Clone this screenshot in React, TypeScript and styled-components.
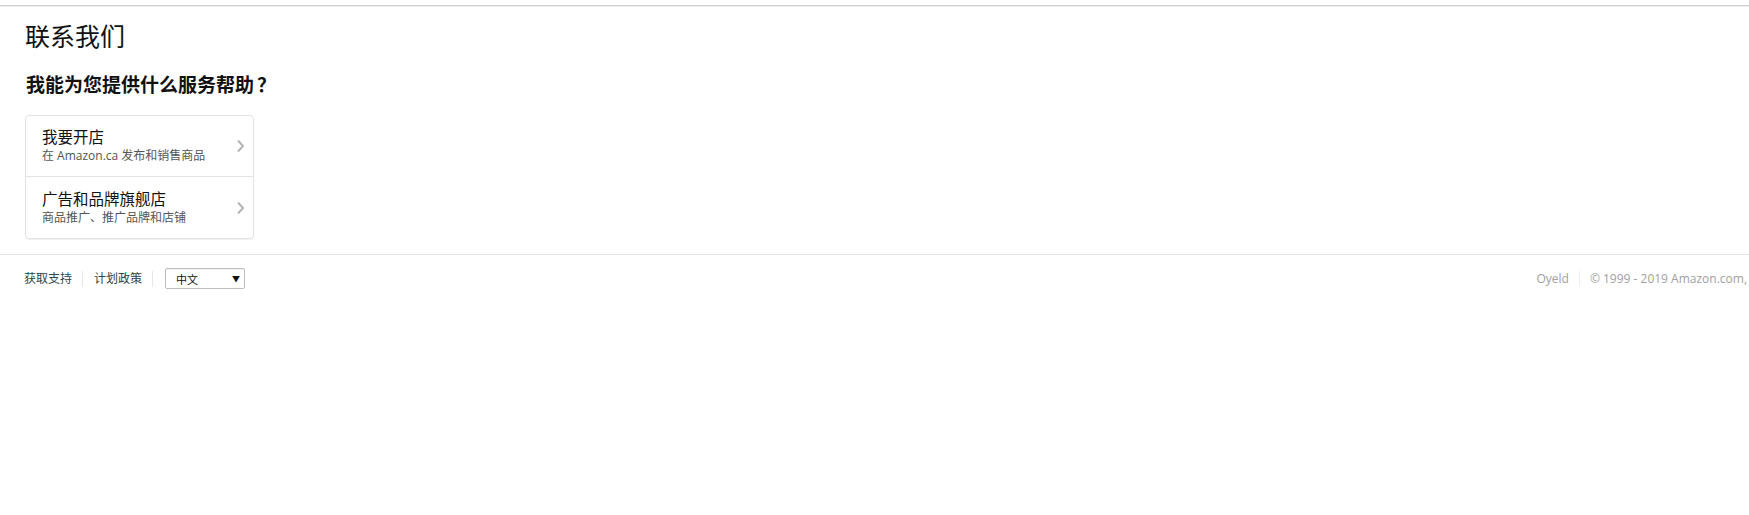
import React from "react";
import styled, { createGlobalStyle } from "styled-components";

const Global = createGlobalStyle`
  html, body { margin: 0; padding: 0; background: #fff; overflow: hidden; }
  body {
    font-family: "Open Sans", "Noto Sans CJK SC", sans-serif;
    color: #111;
  }
  * { box-sizing: border-box; }
`;

const Page = styled.div`
  padding-top: 5px;
  width: 100%;
`;

const TopRule = styled.div`
  height: 2px;
  border-top: 1px solid #d0d0d0;
  border-bottom: 1px solid #ececec;
`;

const Main = styled.main`
  padding: 0 25px;
  display: flex;
  flex-direction: column;
`;

const Title = styled.h1`
  margin: 13px 0 0 0;
  font-size: 25px;
  line-height: 32px;
  font-weight: 400;
  color: #111;
`;

const Heading = styled.h2`
  margin: 19px 0 0 1px;
  font-size: 19px;
  line-height: 26px;
  font-weight: 700;
  color: #111;
`;

const Q = styled.span`
  margin-left: 3px;
  font-family: "Noto Sans CJK SC", sans-serif;
`;

const Card = styled.div`
  margin-top: 17px;
  width: 229px;
  border: 1px solid #e3e3e3;
  border-radius: 4px;
  box-shadow: 0 1px 1px rgba(0, 0, 0, 0.06);
  display: flex;
  flex-direction: column;
`;

const Row = styled.a<{ $last?: boolean }>`
  display: flex;
  align-items: center;
  height: 61px;
  padding: 0 8px 0 16px;
  border-bottom: ${(p) => (p.$last ? "none" : "1px solid #e3e3e3")};
  text-decoration: none;
  cursor: pointer;
`;

const RowText = styled.div`
  flex: 1;
  display: flex;
  flex-direction: column;
`;

const RowTitle = styled.span`
  font-size: 15.5px;
  line-height: 19px;
  color: #111;
`;

const RowSub = styled.span`
  font-size: 12px;
  line-height: 17px;
  color: #555;
`;

const Chevron = () => (
  <svg width="9" height="14" viewBox="0 0 9 14" aria-hidden>
    <path d="M2 1.5 L7 7 L2 12.5" fill="none" stroke="#b4b4b4" strokeWidth="2" />
  </svg>
);

const Footer = styled.footer`
  margin-top: 15px;
  border-top: 1px solid #e3e3e3;
  padding: 13px 2px 0 24px;
  display: flex;
  align-items: center;
`;

const LinkGroup = styled.div`
  display: flex;
  align-items: center;
`;

const FootLink = styled.a`
  font-size: 12px;
  line-height: 16px;
  color: #2e4449;
  text-decoration: none;
  padding-right: 10px;
  margin-right: 11px;
  border-right: 1px solid #e7e7e7;
  height: 16px;
`;

const LangSelect = styled.div`
  margin-left: 1px;
  width: 80px;
  height: 21px;
  border: 1px solid #bdbdbd;
  border-radius: 2px;
  box-shadow: inset 0 1px 0 #f0f0f0;
  display: flex;
  align-items: center;
  justify-content: space-between;
  padding: 0 4px 0 10px;
  font-size: 11px;
  color: #111;
`;

const Arrow = styled.span`
  font-size: 8px;
  color: #111;
`;

const Right = styled.div`
  margin-left: auto;
  flex-shrink: 0;
  white-space: nowrap;
  display: flex;
  align-items: center;
  font-size: 12px;
  line-height: 16px;
  color: #a0a0a0;
`;

const RightItem = styled.span<{ $sep?: boolean }>`
  padding-right: ${(p) => (p.$sep ? "10px" : "0")};
  margin-right: ${(p) => (p.$sep ? "10px" : "0")};
  border-right: ${(p) => (p.$sep ? "1px solid #eee" : "none")};
`;

export default function App() {
  return (
    <Page>
      <Global />
      <TopRule />
      <Main>
        <Title>联系我们</Title>
        <Heading>
          我能为您提供什么服务帮助<Q>？</Q>
        </Heading>
        <Card>
          <Row>
            <RowText>
              <RowTitle>我要开店</RowTitle>
              <RowSub>在 Amazon.ca 发布和销售商品</RowSub>
            </RowText>
            <Chevron />
          </Row>
          <Row $last>
            <RowText>
              <RowTitle>广告和品牌旗舰店</RowTitle>
              <RowSub>商品推广、推广品牌和店铺</RowSub>
            </RowText>
            <Chevron />
          </Row>
        </Card>
      </Main>
      <Footer>
        <LinkGroup>
          <FootLink>获取支持</FootLink>
          <FootLink>计划政策</FootLink>
          <LangSelect>
            <span>中文</span>
            <Arrow>▼</Arrow>
          </LangSelect>
        </LinkGroup>
        <Right>
          <RightItem $sep>Oyeld</RightItem>
          <RightItem>© 1999 - 2019 Amazon.com,</RightItem>
        </Right>
      </Footer>
    </Page>
  );
}
